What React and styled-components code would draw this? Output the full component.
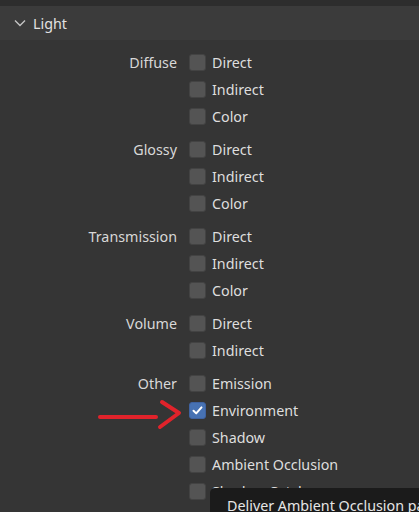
import styled, { createGlobalStyle } from 'styled-components';

const GlobalStyle = createGlobalStyle`
  html, body {
    margin: 0;
    padding: 0;
    background: #353535;
    overflow: hidden;
  }
  body {
    font-family: 'Noto Sans', 'DejaVu Sans', sans-serif;
    font-size: 14.3px;
    color: #dedede;
  }
`;

const Screen = styled.div`
  position: relative;
  width: 419px;
  height: 512px;
  overflow: hidden;
  background: #353535;
  border-top: 6px solid #2d2d2d;
  box-sizing: border-box;
`;

const Header = styled.div`
  display: flex;
  align-items: center;
  gap: 7px;
  height: 34px;
  padding-left: 14px;
  background: #3b3b3b;
  color: #e2e2e2;
`;

const Panel = styled.div`
  display: flex;
  flex-direction: column;
  gap: 6px;
  padding-top: 9px;
`;

const Group = styled.div`
  display: grid;
  grid-template-columns: 177px 1fr;
  column-gap: 12px;
`;

const GroupLabel = styled.div`
  text-align: right;
  line-height: 27px;
  color: #d8d8d8;
`;

const Items = styled.div`
  display: flex;
  flex-direction: column;
`;

const Row = styled.label`
  display: flex;
  align-items: center;
  gap: 6px;
  height: 27px;
  white-space: nowrap;
`;

const Box = styled.span`
  display: flex;
  align-items: center;
  justify-content: center;
  width: 17px;
  height: 17px;
  box-sizing: border-box;
  border-radius: 3px;
  border: 1px solid ${(p) => (p.$checked ? '#3f62a0' : '#434343')};
  background: ${(p) => (p.$checked ? '#4772b3' : '#545454')};
`;

const Tooltip = styled.div`
  position: absolute;
  left: 210px;
  top: 482px;
  width: 240px;
  height: 50px;
  box-sizing: border-box;
  padding: 8px 17px;
  background: #1b1b1b;
  border-radius: 5px;
  color: #e6e6e6;
  white-space: nowrap;
`;

const Arrow = styled.svg`
  position: absolute;
  left: 95px;
  top: 386px;
`;

const groups = [
  { label: 'Diffuse', items: ['Direct', 'Indirect', 'Color'] },
  { label: 'Glossy', items: ['Direct', 'Indirect', 'Color'] },
  { label: 'Transmission', items: ['Direct', 'Indirect', 'Color'] },
  { label: 'Volume', items: ['Direct', 'Indirect'] },
  {
    label: 'Other',
    items: ['Emission', 'Environment', 'Shadow', 'Ambient Occlusion', 'Shadow Catcher'],
  },
];

const Check = ({ checked }) => (
  <Box $checked={checked}>
    {checked && (
      <svg width="13" height="13" viewBox="0 0 13 13">
        <path d="M2.5 6.8 L5.2 9.4 L10.5 3.4" fill="none" stroke="#fff" strokeWidth="2" strokeLinecap="round" strokeLinejoin="round" />
      </svg>
    )}
  </Box>
);

export default function App() {
  return (
    <Screen>
      <GlobalStyle />
      <Header>
        <svg width="12" height="8" viewBox="0 0 12 8">
          <path d="M1 1.5 L6 6.5 L11 1.5" fill="none" stroke="#c4c4c4" strokeWidth="1.4" />
        </svg>
        <span>Light</span>
      </Header>
      <Panel>
        {groups.map((g) => (
          <Group key={g.label}>
            <GroupLabel>{g.label}</GroupLabel>
            <Items>
              {g.items.map((item) => (
                <Row key={item}>
                  <Check checked={item === 'Environment'} />
                  {item}
                </Row>
              ))}
            </Items>
          </Group>
        ))}
      </Panel>
      <Arrow width="95" height="45" viewBox="0 0 95 45">
        <path d="M5 25 L61 25" stroke="#e1232b" strokeWidth="4" strokeLinecap="round" />
        <path d="M67 10 L84 21 L65 35" fill="none" stroke="#e1232b" strokeWidth="4" strokeLinecap="round" strokeLinejoin="round" />
      </Arrow>
      <Tooltip>Deliver Ambient Occlusion pass</Tooltip>
    </Screen>
  );
}
